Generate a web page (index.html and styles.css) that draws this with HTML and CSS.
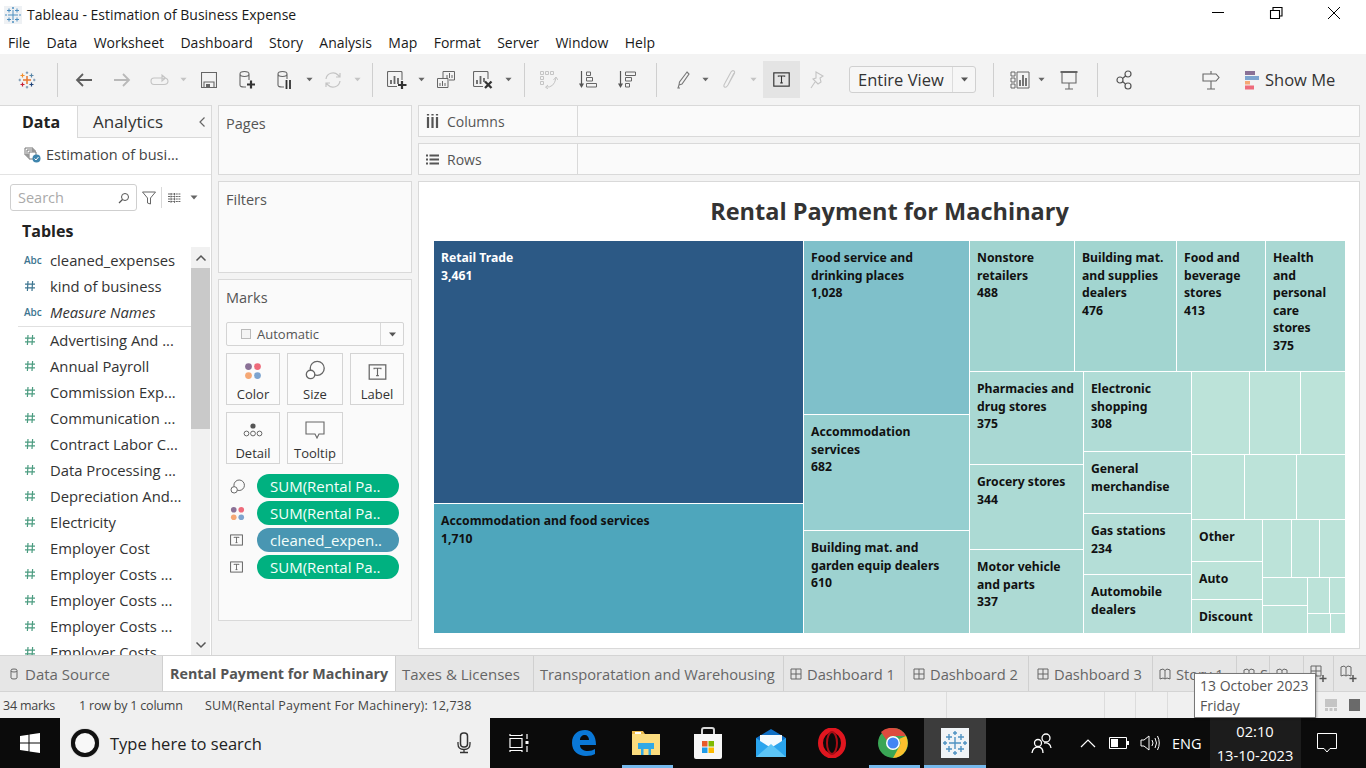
FILE: index.html
```html
<!DOCTYPE html>
<html lang="en">
<head>
<meta charset="utf-8">
<title>Tableau - Estimation of Business Expense</title>
<link rel="stylesheet" href="styles.css">
</head>
<body>
<svg class="defs" width="0" height="0">
  <symbol id="hash" viewBox="0 0 12 12"><path d="M4 1L3.400 11M8.600 1L8 11M1 4.200H11M1 7.800H11" fill="none" stroke="currentColor" stroke-width="1.200"/></symbol>
  <symbol id="caret" viewBox="0 0 8 5"><path d="M0.500 0.500H7.500L4 4.500Z" fill="currentColor"/></symbol>
  <symbol id="tbox" viewBox="0 0 16 14"><rect x="0.750" y="0.750" width="14.500" height="12.500" fill="none" stroke="currentColor" stroke-width="1.100"/><path d="M5 4.500V3.700H11V4.500M8 3.700V10.200M6.800 10.200H9.200" fill="none" stroke="currentColor"/></symbol>
  <symbol id="four" viewBox="0 0 16 16"><circle cx="4" cy="4" r="3" fill="#8a7196"/><circle cx="12" cy="4" r="3" fill="#ee6b7b"/><circle cx="4" cy="12" r="3" fill="#f5a875"/><circle cx="12" cy="12" r="3" fill="#7da4cf"/></symbol>
  <symbol id="size" viewBox="0 0 18 18"><circle cx="11" cy="7.500" r="6.300" fill="none" stroke="#666" stroke-width="1.200"/><circle cx="5" cy="13" r="3.800" fill="#fff" stroke="#666" stroke-width="1.200"/></symbol>
  <symbol id="tab-board" viewBox="0 0 12 12"><path d="M1 1H11V11H1ZM6 1V11M1 6H11" fill="none" stroke="#666"/></symbol>
  <symbol id="book" viewBox="0 0 12 12"><path d="M1 2L4 1L6 2.500L8 1L11 2V11L8 10L6 11L4 10L1 11ZM6 2.500V11" fill="none" stroke="#666"/></symbol>
</svg>

<header class="titlebar">
  <div class="title-left">
    <svg class="app-icon" viewBox="0 0 18 18"><rect width="18" height="18" fill="#eef1f4"/><path d="M9 4V14M4 9H14M5 2.500V6.500M3 4.500H7M13 2.500V6.500M11 4.500H15M5 11.500V15.500M3 13.500H7M13 11.500V15.500M11 13.500H15M9 1V3M8 2H10M9 15V17M8 16H10M1 9H3M15 9H17" stroke="#4d8fc0" stroke-width="1"/></svg>
    <span>Tableau - Estimation of Business Expense</span>
  </div>
  <div class="win-controls">
    <svg viewBox="0 0 58 32"><path d="M23 13.500H35" stroke="#000"/></svg>
    <svg viewBox="0 0 58 32"><path d="M23.500 11.500H32.500V19.500H23.500ZM26 11V8.500H35V17H32.500" fill="none" stroke="#000" stroke-width="1.100"/></svg>
    <svg viewBox="0 0 58 32"><path d="M23 8L35 20M35 8L23 20" stroke="#000"/></svg>
  </div>
</header>

<nav class="menubar">
  <span>File</span><span>Data</span><span>Worksheet</span><span>Dashboard</span><span>Story</span><span>Analysis</span><span>Map</span><span>Format</span><span>Server</span><span>Window</span><span>Help</span>
</nav>

<div class="toolbar">
  <div class="t t-logo"><svg width="18" height="18" viewBox="0 0 18 18" fill="none" stroke-width="1.200"><path d="M9 5V13M5 9H13" stroke="#e8762d" stroke-width="1.500"/><path d="M4.500 2.500V6.500M2.500 4.500H6.500" stroke="#f28e2b"/><path d="M13.500 2.500V6.500M11.500 4.500H15.500" stroke="#5a86a8"/><path d="M4.500 11.500V15.500M2.500 13.500H6.500" stroke="#c72035"/><path d="M13.500 11.500V15.500M11.500 13.500H15.500" stroke="#1f447a"/><path d="M9 0.500V3M7.800 1.700H10.200M9 15V17.500M7.800 16.200H10.200M0.500 9H3M1.700 7.800V10.200M15 9H17.500M16.200 7.800V10.200" stroke="#7f9cb5"/></svg></div>
  <div class="t t-sep1"><i class="sep"></i></div>
  <div class="t t-back"><svg width="17" height="14" viewBox="0 0 17 14"><path d="M17 7H2M8 1L2 7L8 13" fill="none" stroke="#5f5f5f" stroke-width="1.800"/></svg></div>
  <div class="t t-fwd"><svg width="17" height="14" viewBox="0 0 17 14"><path d="M0 7H15M9 1L15 7L9 13" fill="none" stroke="#b9b9b9" stroke-width="1.800"/></svg></div>
  <div class="t t-redo"><svg width="19" height="12" viewBox="0 0 19 12"><path d="M12 4H4Q1 4 1 7Q1 10.500 4 10.500H14Q18 10.500 18 7Q18 5 16 4.200H12M12 1V7L15.500 4Z" fill="none" stroke="#c4c4c4" stroke-width="1.100"/></svg></div>
  <div class="t t-c1 off"><svg class="caret"><use href="#caret"/></svg></div>
  <div class="t t-save"><svg width="16" height="16" viewBox="0 0 16 16"><path d="M0.500 0.500H15.500V15.500H0.500ZM3 15.500V10H13V15.500" fill="none" stroke="#666" stroke-width="1.100"/><rect x="5" y="12" width="4" height="3.500" fill="#666"/></svg></div>
  <div class="t t-add"><svg width="18" height="20" viewBox="0 0 18 20"><path d="M2 4V15Q2 17 6 17H8M2 4Q2 1.500 6.500 1.500T11 4V10M2 4Q2 6.500 6.500 6.500T11 4" fill="none" stroke="#666" stroke-width="1.100"/><path d="M13 10.500V18.500M9 14.500H17" stroke="#333" stroke-width="2.200"/></svg></div>
  <div class="t t-pause"><svg width="18" height="20" viewBox="0 0 18 20"><path d="M2 4V15Q2 17 6 17H8M2 4Q2 1.500 6.500 1.500T11 4V9M2 4Q2 6.500 6.500 6.500T11 4" fill="none" stroke="#666" stroke-width="1.100"/><path d="M10.500 10V19M14 10V19" stroke="#333" stroke-width="1.800"/></svg></div>
  <div class="t t-c2"><svg class="caret"><use href="#caret"/></svg></div>
  <div class="t t-refresh"><svg width="18" height="18" viewBox="0 0 18 18"><path d="M2 8A7 7 0 0 1 14 4L16 6M16 10A7 7 0 0 1 4 14L2 12M16 2V6H12M2 16V12H6" fill="none" stroke="#c4c4c4" stroke-width="1.200"/></svg></div>
  <div class="t t-c3 off"><svg class="caret"><use href="#caret"/></svg></div>
  <div class="t t-sep2"><i class="sep"></i></div>
  <div class="t t-new"><svg width="20" height="18" viewBox="0 0 20 18"><path d="M15 9V1.500Q15 0.500 14 0.500H1.500Q0.500 0.500 0.500 1.500V14.500Q0.500 15.500 1.500 15.500H10" fill="none" stroke="#666" stroke-width="1.100"/><path d="M4 13V9M7.500 13V5M11 13V7" stroke="#666" stroke-width="1.800"/><path d="M15 10V18M11 14H19.500" stroke="#333" stroke-width="2.200"/></svg></div>
  <div class="t t-c4"><svg class="caret"><use href="#caret"/></svg></div>
  <div class="t t-dup"><svg width="18" height="18" viewBox="0 0 18 18"><path d="M6 7V0.500H17.500V9H12" fill="none" stroke="#666"/><path d="M0.500 7.500H11V16.500H0.500Z" fill="none" stroke="#666"/><path d="M10 7V4M12.500 7V2M15 7V4M3 15V12M5.500 15V10M8 15V12" stroke="#666"/></svg></div>
  <div class="t t-clear"><svg width="20" height="18" viewBox="0 0 20 18"><path d="M15 8V1.500Q15 0.500 14 0.500H1.500Q0.500 0.500 0.500 1.500V14.500Q0.500 15.500 1.500 15.500H10" fill="none" stroke="#666" stroke-width="1.100"/><path d="M4 13V9M7.500 13V5M11 11V7" stroke="#666" stroke-width="1.800"/><path d="M12 10.500L18.500 17M18.500 10.500L12 17" stroke="#333" stroke-width="2.300"/></svg></div>
  <div class="t t-c5"><svg class="caret"><use href="#caret"/></svg></div>
  <div class="t t-sep3"><i class="sep"></i></div>
  <div class="t t-swap"><svg width="18" height="18" viewBox="0 0 18 18"><path d="M0.500 0.500H3.500V3.500H0.500ZM5.500 0.500H8.500V3.500H5.500ZM10.500 0.500H13.500V3.500H10.500ZM0.500 5.500H3.500V8.500H0.500ZM0.500 10.500H3.500V13.500H0.500ZM6 16Q14 17 16 7M13.500 9L16 6L18 9M8 14L5.500 16.200L8 18" fill="none" stroke="#c4c4c4" stroke-width="1"/></svg></div>
  <div class="t t-sort1"><svg width="18" height="18" viewBox="0 0 18 18"><path d="M2.500 0V13" fill="none" stroke="#555" stroke-width="1.200"/><path d="M0 12.500H5L2.500 17Z" fill="#555"/><path d="M7.500 1H11.500V4.500H7.500ZM7.500 6.500H13.500V10H7.500ZM7.500 12.500H17.500V16H7.500Z" fill="none" stroke="#666"/></svg></div>
  <div class="t t-sort2"><svg width="18" height="18" viewBox="0 0 18 18"><path d="M2.500 0V13" fill="none" stroke="#555" stroke-width="1.200"/><path d="M0 12.500H5L2.500 17Z" fill="#555"/><path d="M7.500 1H17.500V4.500H7.500ZM7.500 6.500H13.500V10H7.500ZM7.500 12.500H11.500V16H7.500Z" fill="none" stroke="#666"/></svg></div>
  <div class="t t-sep4"><i class="sep"></i></div>
  <div class="t t-high"><svg width="14" height="18" viewBox="0 0 14 18"><path d="M11 1L13 3L6 13L3 14L3.500 11ZM3 14L2 17H4" fill="none" stroke="#777" stroke-width="1.100"/></svg></div>
  <div class="t t-c6"><svg class="caret"><use href="#caret"/></svg></div>
  <div class="t t-clip"><svg width="14" height="20" viewBox="0 0 14 20"><path d="M12 3L6 15Q4 18 2.500 17T3 13L9 2Q10.500 0 12 1T11.500 5L6 15" fill="none" stroke="#c4c4c4" stroke-width="1.100"/></svg></div>
  <div class="t t-c7 off"><svg class="caret"><use href="#caret"/></svg></div>
  <div class="t t-text"><svg class="tbox-lg"><use href="#tbox"/></svg></div>
  <div class="t t-pin"><svg width="14" height="18" viewBox="0 0 14 18"><path d="M6 1L13 5L10 7L11 11L8 13L3 8L6 7ZM5 11L1 17" fill="none" stroke="#c4c4c4" stroke-width="1.100"/></svg></div>
  <div class="view-box"><span class="view-label">Entire View</span><span class="view-arrow"><svg class="caret dark"><use href="#caret"/></svg></span></div>
  <div class="t t-sep5"><i class="sep"></i></div>
  <div class="t t-viz"><svg width="20" height="18" viewBox="0 0 20 18"><path d="M1 1H5V5H1ZM1 7H5V11H1ZM1 13H5V17H1ZM7 1H19V17H7Z" fill="none" stroke="#666"/><path d="M10 15V9M13 15V4M16 15V7" stroke="#666" stroke-width="1.800"/></svg></div>
  <div class="t t-c8"><svg class="caret"><use href="#caret"/></svg></div>
  <div class="t t-pres"><svg width="18" height="20" viewBox="0 0 18 20"><path d="M0.500 2H17.500" stroke="#666" stroke-width="2"/><path d="M2 2V13H16V2M9 13V19M5 19H13" fill="none" stroke="#666" stroke-width="1.100"/></svg></div>
  <div class="t t-sep6"><i class="sep"></i></div>
  <div class="t t-share"><svg width="16" height="20" viewBox="0 0 16 20"><circle cx="12" cy="4" r="3" fill="none" stroke="#555" stroke-width="1.200"/><circle cx="12" cy="16" r="3" fill="none" stroke="#555" stroke-width="1.200"/><circle cx="4" cy="10" r="3" fill="none" stroke="#555" stroke-width="1.200"/><path d="M6.500 8.500L9.500 6M6.500 11.500L9.500 14" stroke="#555" stroke-width="1.200"/></svg></div>
  <div class="t t-guide"><svg width="18" height="20" viewBox="0 0 18 20"><path d="M1 4H14L17 7.500L14 11H1ZM9 1V4M9 11V19M5 19H13" fill="none" stroke="#666" stroke-width="1.100"/></svg></div>
  <div class="showme">
    <svg width="14" height="20" viewBox="0 0 14 20"><rect y="1" width="10" height="4" fill="#8a7196"/><rect y="6" width="14" height="4" fill="#7da4cf"/><rect y="11" width="5" height="3.500" fill="#f5a875"/><rect y="15.500" width="9" height="4" fill="#ee6b7b"/></svg>
    <span>Show Me</span>
  </div>
</div>

<main class="workspace">
  <aside class="data-pane">
    <div class="pane-tabs">
      <div class="pane-tab active">Data</div>
      <div class="pane-tab">Analytics<svg class="collapse" viewBox="0 0 8 12"><path d="M6.500 1.500L2 6L6.500 10.500" fill="none" stroke="#666" stroke-width="1.200"/></svg></div>
    </div>
    <div class="source-row">
      <svg width="17" height="17" viewBox="0 0 17 17"><path d="M1 2H9V9H1ZM3 4H11V11H3Z" fill="none" stroke="#777"/><path d="M5 6H12V13H5Z" fill="#fff" stroke="#777"/><circle cx="12.500" cy="12.500" r="4" fill="#3f85ad"/><path d="M10.500 12.500L12 14L14.500 11" fill="none" stroke="#fff"/></svg>
      <span>Estimation of busi...</span>
    </div>
    <div class="search-row">
      <div class="search-box"><span>Search</span><svg width="12" height="12" viewBox="0 0 12 12"><circle cx="7" cy="5" r="3.500" fill="none" stroke="#555"/><path d="M4.500 7.500L1 11" stroke="#555" stroke-width="1.200"/></svg></div>
      <svg class="filter" width="14" height="14" viewBox="0 0 14 14"><path d="M0.500 1H13.500L8.500 7V13L5.500 12V7Z" fill="none" stroke="#666"/></svg>
      <i class="search-div"></i>
      <svg class="list-ic" width="13" height="10" viewBox="0 0 13 10"><path d="M0 1H13M0 3.500H13M0 6H13M0 8.500H13M3 0V10M6.500 0V10" stroke="#666" stroke-dasharray="2 .6"/></svg>
      <svg class="caret list-caret"><use href="#caret"/></svg>
    </div>
    <h2 class="tables-h">Tables</h2>
    <div class="fields-wrap">
      <ul class="fields">
        <li><b class="abc">Abc</b><span>cleaned_expenses</span></li>
        <li><svg class="hash dim"><use href="#hash"/></svg><span>kind of business</span></li>
        <li class="divided"><b class="abc">Abc</b><em>Measure Names</em></li>
        <li><svg class="hash"><use href="#hash"/></svg><span>Advertising And ...</span></li>
        <li><svg class="hash"><use href="#hash"/></svg><span>Annual Payroll</span></li>
        <li><svg class="hash"><use href="#hash"/></svg><span>Commission Exp...</span></li>
        <li><svg class="hash"><use href="#hash"/></svg><span>Communication ...</span></li>
        <li><svg class="hash"><use href="#hash"/></svg><span>Contract Labor C...</span></li>
        <li><svg class="hash"><use href="#hash"/></svg><span>Data Processing ...</span></li>
        <li><svg class="hash"><use href="#hash"/></svg><span>Depreciation And...</span></li>
        <li><svg class="hash"><use href="#hash"/></svg><span>Electricity</span></li>
        <li><svg class="hash"><use href="#hash"/></svg><span>Employer Cost</span></li>
        <li><svg class="hash"><use href="#hash"/></svg><span>Employer Costs ...</span></li>
        <li><svg class="hash"><use href="#hash"/></svg><span>Employer Costs ...</span></li>
        <li><svg class="hash"><use href="#hash"/></svg><span>Employer Costs ...</span></li>
        <li><svg class="hash"><use href="#hash"/></svg><span>Employer Costs</span></li>
      </ul>
      <div class="scrollbar">
        <div class="sb-btn"><svg width="12" height="8" viewBox="0 0 12 8"><path d="M1.500 6.500L6 2L10.500 6.500" fill="none" stroke="#555" stroke-width="1.500"/></svg></div>
        <div class="sb-thumb"></div>
        <div class="sb-track"></div>
        <div class="sb-btn"><svg width="12" height="8" viewBox="0 0 12 8"><path d="M1.500 1.500L6 6L10.500 1.500" fill="none" stroke="#555" stroke-width="1.500"/></svg></div>
      </div>
    </div>
  </aside>

  <section class="cards">
    <div class="card card-pages"><h3>Pages</h3></div>
    <div class="card card-filters"><h3>Filters</h3></div>
    <div class="card card-marks">
      <h3>Marks</h3>
      <div class="mark-type">
        <span class="mark-type-main"><i class="square"></i>Automatic</span>
        <span class="mark-type-arrow"><svg class="caret dark"><use href="#caret"/></svg></span>
      </div>
      <div class="mark-grid">
        <div class="mark-btn"><svg width="18" height="18"><use href="#four"/></svg><span>Color</span></div>
        <div class="mark-btn"><svg width="20" height="20"><use href="#size"/></svg><span>Size</span></div>
        <div class="mark-btn"><svg class="tbox-lg grey"><use href="#tbox"/></svg><span>Label</span></div>
        <div class="mark-btn"><svg width="20" height="18" viewBox="0 0 20 18"><circle cx="10" cy="5" r="2.600" fill="#555"/><circle cx="3.500" cy="12.500" r="2.400" fill="none" stroke="#666"/><circle cx="10" cy="12.500" r="2.400" fill="none" stroke="#666"/><circle cx="16.500" cy="12.500" r="2.400" fill="none" stroke="#666"/></svg><span>Detail</span></div>
        <div class="mark-btn"><svg width="20" height="18" viewBox="0 0 20 18"><path d="M1 1H19V13H14L12 17L10 13H1Z" fill="none" stroke="#666" stroke-width="1.100"/></svg><span>Tooltip</span></div>
      </div>
      <div class="pills">
        <div class="pill-row"><svg width="15" height="15"><use href="#size"/></svg><span class="pill">SUM(Rental Pa..</span></div>
        <div class="pill-row"><svg width="15" height="15"><use href="#four"/></svg><span class="pill">SUM(Rental Pa..</span></div>
        <div class="pill-row"><svg class="tbox-sm"><use href="#tbox"/></svg><span class="pill blue">cleaned_expen..</span></div>
        <div class="pill-row"><svg class="tbox-sm"><use href="#tbox"/></svg><span class="pill">SUM(Rental Pa..</span></div>
      </div>
    </div>
  </section>

  <section class="stage">
    <div class="shelf"><div class="shelf-label"><svg width="13" height="14" viewBox="0 0 13 14"><path d="M2 3V14M6.500 3V14M11 3V14M2 0V1.500M6.500 0V1.500M11 0V1.500" stroke="#555" stroke-width="2.200"/></svg>Columns</div></div>
    <div class="shelf"><div class="shelf-label"><svg width="13" height="11" viewBox="0 0 13 11"><path d="M0 1.500H2M3.500 1.500H13M0 5.500H2M3.500 5.500H13M0 9.500H2M3.500 9.500H13" stroke="#555" stroke-width="2"/></svg>Rows</div></div>
    <div class="viz">
      <h1>Rental Payment for Machinary</h1>
      <div class="tm row grow">
        <div class="col" style="flex:369 1 0">
          <div class="cell light-text" style="flex:262 1 0;background:#2c5985"><b>Retail Trade</b><b>3,461</b></div>
          <div class="cell" style="flex:129 1 0;background:#4ea6bc"><b>Accommodation and food services</b><b>1,710</b></div>
        </div>
        <div class="col" style="flex:165 1 0">
          <div class="cell" style="flex:173 1 0;background:#7fc0ca"><b>Food service and<br>drinking places</b><b>1,028</b></div>
          <div class="cell" style="flex:115 1 0;background:#96cfd0"><b>Accommodation<br>services</b><b>682</b></div>
          <div class="cell" style="flex:102 1 0;background:#9dd2d0"><b>Building mat. and<br>garden equip dealers</b><b>610</b></div>
        </div>
        <div class="col" style="flex:375 1 0">
          <div class="row" style="flex:130 1 0">
            <div class="cell" style="flex:104 1 0;background:#a1d4d0"><b>Nonstore<br>retailers</b><b>488</b></div>
            <div class="cell" style="flex:101 1 0;background:#a2d5d0"><b>Building mat.<br>and supplies<br>dealers</b><b>476</b></div>
            <div class="cell" style="flex:88 1 0;background:#a7d7d2"><b>Food and<br>beverage<br>stores</b><b>413</b></div>
            <div class="cell" style="flex:79 1 0;background:#a9d8d3"><b>Health<br>and<br>personal<br>care<br>stores</b><b>375</b></div>
          </div>
          <div class="row" style="flex:261 1 0">
            <div class="col" style="flex:113 1 0">
              <div class="cell" style="flex:92 1 0;background:#a9d8d3"><b>Pharmacies and<br>drug stores</b><b>375</b></div>
              <div class="cell" style="flex:84 1 0;background:#acdad4"><b>Grocery stores</b><b>344</b></div>
              <div class="cell" style="flex:83 1 0;background:#addad4"><b>Motor vehicle<br>and parts</b><b>337</b></div>
            </div>
            <div class="col" style="flex:107 1 0">
              <div class="cell" style="flex:79 1 0;background:#b0dcd6"><b>Electronic<br>shopping</b><b>308</b></div>
              <div class="cell" style="flex:61 1 0;background:#b3ddd7"><b>General<br>merchandise</b></div>
              <div class="cell" style="flex:60 1 0;background:#b4ded7"><b>Gas stations</b><b>234</b></div>
              <div class="cell" style="flex:58 1 0;background:#b5ded8"><b>Automobile<br>dealers</b></div>
            </div>
            <div class="col" style="flex:153 1 0">
              <div class="row" style="flex:82 1 0">
                <div class="cell pale" style="flex:57 1 0"></div>
                <div class="cell pale" style="flex:50 1 0"></div>
                <div class="cell pale" style="flex:44 1 0"></div>
              </div>
              <div class="row" style="flex:64 1 0">
                <div class="cell pale" style="flex:52 1 0"></div>
                <div class="cell pale" style="flex:51 1 0"></div>
                <div class="cell pale" style="flex:48 1 0"></div>
              </div>
              <div class="row" style="flex:113 1 0">
                <div class="col" style="flex:70 1 0">
                  <div class="cell pale" style="flex:41 1 0"><b>Other</b></div>
                  <div class="cell pale" style="flex:37 1 0"><b>Auto</b></div>
                  <div class="cell pale" style="flex:33 1 0"><b>Discount</b></div>
                </div>
                <div class="col" style="flex:82 1 0">
                  <div class="row" style="flex:57 1 0">
                    <div class="cell pale" style="flex:28 1 0"></div>
                    <div class="cell pale" style="flex:27 1 0"></div>
                    <div class="cell pale" style="flex:25 1 0"></div>
                  </div>
                  <div class="row" style="flex:55 1 0">
                    <div class="col" style="flex:44 1 0">
                      <div class="cell pale" style="flex:27 1 0"></div>
                      <div class="cell pale" style="flex:27 1 0"></div>
                    </div>
                    <div class="col" style="flex:37 1 0">
                      <div class="row" style="flex:35 1 0">
                        <div class="cell pale" style="flex:21 1 0"></div>
                        <div class="cell pale" style="flex:15 1 0"></div>
                      </div>
                      <div class="row" style="flex:19 1 0">
                        <div class="cell pale" style="flex:22 1 0"></div>
                        <div class="cell pale" style="flex:14 1 0"></div>
                      </div>
                    </div>
                  </div>
                </div>
              </div>
            </div>
          </div>
        </div>
      </div>
    </div>
  </section>
</main>

<div class="tabs">
  <div class="tab tab-ds"><svg width="8" height="12" viewBox="0 0 8 12"><path d="M1 2V10Q1 11 4 11T7 10V2Q7 1 4 1T1 2ZM1 3Q1 4 4 4T7 3" fill="none" stroke="#666"/></svg>Data Source</div>
  <div class="tab tab-active">Rental Payment for Machinary</div>
  <div class="tab tab-tax">Taxes &amp; Licenses</div>
  <div class="tab tab-trans">Transporatation and Warehousing</div>
  <div class="tab tab-d1"><svg width="12" height="12"><use href="#tab-board"/></svg>Dashboard 1</div>
  <div class="tab tab-d2"><svg width="12" height="12"><use href="#tab-board"/></svg>Dashboard 2</div>
  <div class="tab tab-d3"><svg width="12" height="12"><use href="#tab-board"/></svg>Dashboard 3</div>
  <div class="tab tab-s1"><svg width="12" height="12"><use href="#book"/></svg>Story 1</div>
  <div class="tab tab-s2"><svg width="12" height="12"><use href="#book"/></svg>S</div>
  <div class="tab tab-s3"><svg width="12" height="12"><use href="#book"/></svg></div>
  <div class="tab tab-plus"><svg width="18" height="18" viewBox="0 0 18 18"><path d="M1 1H11V11H1ZM6 1V11M1 6H11" fill="none" stroke="#666"/><path d="M13 10V17M9.500 13.500H16.500" stroke="#555" stroke-width="1.500"/></svg></div>
  <div class="tab tab-plus2"><svg width="18" height="18" viewBox="0 0 18 18"><path d="M1 2L4 1L6 2.500L8 1L11 2V11L8 10L6 11L4 10L1 11ZM6 2.500V11" fill="none" stroke="#666"/><path d="M13 10V17M9.500 13.500H16.500" stroke="#555" stroke-width="1.500"/></svg></div>
</div>

<div class="status">
  <span class="st st-marks">34 marks</span>
  <span class="st st-rows">1 row by 1 column</span>
  <span class="st st-sum">SUM(Rental Payment For Machinery): 12,738</span>
  <span class="st st-a"></span><span class="st st-b"></span><span class="st st-c"></span>
  <span class="st-icons">
    <svg width="12" height="12" viewBox="0 0 12 12"><rect width="12" height="8" fill="#c5c5c5"/><rect y="9" width="3" height="3" fill="#c5c5c5"/><rect x="4.500" y="9" width="3" height="3" fill="#c5c5c5"/><rect x="9" y="9" width="3" height="3" fill="#c5c5c5"/></svg>
    <svg width="11" height="12" viewBox="0 0 11 12"><rect width="11" height="12" fill="#6a6a6a"/></svg>
  </span>
</div>

<footer class="taskbar">
  <div class="start"><svg width="20" height="20" viewBox="0 0 20 20"><path d="M0 3L8.500 1.700V9.500H0ZM9.500 1.500L20 0V9.500H9.500ZM0 10.500H8.500V18.300L0 17ZM9.500 10.500H20V20L9.500 18.500Z" fill="#fff"/></svg></div>
  <div class="task-search">
    <i class="cortana"></i>
    <span>Type here to search</span>
    <svg width="16" height="22" viewBox="0 0 16 22"><rect x="4.500" y="1" width="7" height="14" rx="3" fill="none" stroke="#333" stroke-width="1.500"/><path d="M2 10V12Q2 17.500 8 17.500T14 12V10M8 18V20.500M4 20.500H12" fill="none" stroke="#333" stroke-width="1.300"/></svg>
  </div>
  <div class="tk tk-view"><svg width="20" height="20" viewBox="0 0 20 20"><path d="M1 5.500H13V14.500H1ZM1 1V2.500H13V1M1 19V17.500H13V19M18 1V6M18 13V19" fill="none" stroke="#fff" stroke-width="1.200"/><rect x="16.500" y="8" width="3" height="3" fill="#fff"/></svg></div>
  <div class="tk tk-edge"><svg width="26" height="28" viewBox="0 0 26 28"><path d="M1 14C1 5 7 1 14 1C21 1 25 7 25 16H9C9 20 13 22 17 22C20 22 22 21 24 20V25C22 26 19 27 15 27C7 27 1 22 1 14ZM9 11H18C18 8 16 6 14 6C11 6 9 8 9 11Z" fill="#0a78d7"/></svg></div>
  <div class="tk tk-exp running"><svg width="28" height="26" viewBox="0 0 28 26"><path d="M0 4H28V25H0Z" fill="#fbdc7e"/><path d="M0 1H11L13 4H0Z" fill="#e9b94a"/><rect x="3" y="2" width="6" height="2" fill="#fff"/><path d="M6 13H22V19H19V25H9V19H6Z" fill="#2fa9e6"/><rect x="11.500" y="19" width="5" height="6" fill="#fbdc7e"/></svg></div>
  <div class="tk tk-store"><svg width="28" height="32" viewBox="0 0 28 32"><path d="M8 8V3Q8 1 10 1H18Q20 1 20 3V8" fill="none" stroke="#d8d8d8" stroke-width="2"/><path d="M0 7H28V30Q28 32 26 32H2Q0 32 0 30Z" fill="#f6f6f6"/><rect x="8" y="14" width="5.500" height="5.500" fill="#e85b2a"/><rect x="14.500" y="14" width="5.500" height="5.500" fill="#7fba00"/><rect x="8" y="20.500" width="5.500" height="5.500" fill="#1e9be8"/><rect x="14.500" y="20.500" width="5.500" height="5.500" fill="#fbb900"/></svg></div>
  <div class="tk tk-mail"><svg width="30" height="28" viewBox="0 0 30 28"><path d="M0 9L15 0L30 9V28H0Z" fill="#0e6fc4"/><path d="M0 9L15 19L30 9V28H0Z" fill="#2aa5ee"/><path d="M4 6H26V12L15 19L4 12Z" fill="#f3fbff"/><path d="M0 28L15 15L30 28Z" fill="#5cc5f7"/></svg></div>
  <div class="tk tk-opera"><svg width="28" height="30" viewBox="0 0 28 30"><ellipse cx="14" cy="15" rx="11.500" ry="13" fill="none" stroke="#e0161f" stroke-width="5"/><ellipse cx="14" cy="15" rx="5" ry="11" fill="none" stroke="#a80c14" stroke-width="2"/></svg></div>
  <div class="tk tk-chrome running"><svg width="30" height="30" viewBox="0 0 30 30"><circle cx="15" cy="15" r="15" fill="#3aa655"/><path d="M15 0A15 15 0 0 1 28 8H15A7 7 0 0 0 8.500 12L3 4A15 15 0 0 1 15 0Z" fill="#dd4b3e"/><path d="M28 8A15 15 0 0 1 15 30L21 19A7 7 0 0 0 21 11Z" fill="#fbc02d"/><circle cx="15" cy="15" r="7" fill="#fff"/><circle cx="15" cy="15" r="5.500" fill="#4285f4"/></svg></div>
  <div class="tk tk-tableau running"><div class="tb-tile"><svg width="26" height="26" viewBox="0 0 26 26"><path d="M13 7V19M7 13H19M7 4V10M4 7H10M19 4V10M16 7H22M7 16V22M4 19H10M19 16V22M16 19H22M13 1V5M11 3H15M13 21V25M11 23H15M1 13H5M3 11V15M21 13H25M23 11V15" stroke="#4f92c2" stroke-width="1.400"/></svg></div></div>
  <div class="tray">
    <svg class="tr-people" width="22" height="22" viewBox="0 0 22 22"><circle cx="15" cy="6" r="4" fill="none" stroke="#fff" stroke-width="1.300"/><circle cx="7" cy="11" r="3.500" fill="none" stroke="#fff" stroke-width="1.300"/><path d="M1 21Q2 15 7 15T12 21M13 11Q19 10 20 16" fill="none" stroke="#fff" stroke-width="1.300"/></svg>
    <svg class="tr-up" width="16" height="9" viewBox="0 0 16 9"><path d="M1 8L8 1L15 8" fill="none" stroke="#fff" stroke-width="1.200"/></svg>
    <svg class="tr-bat" width="20" height="12" viewBox="0 0 20 12"><path d="M0.500 0.500H17.500V11.500H0.500Z" fill="none" stroke="#fff"/><rect x="2" y="2" width="7" height="8" fill="#fff"/><rect x="18" y="4" width="2" height="4" fill="#fff"/></svg>
    <svg class="tr-vol" width="20" height="18" viewBox="0 0 20 18"><path d="M1 6H4L9 2V16L4 12H1Z" fill="none" stroke="#fff"/><path d="M12 6Q14 9 12 12M15 4Q18 9 15 14M17.500 2Q21 9 17.500 16" fill="none" stroke="#fff"/></svg>
    <span class="tr-eng">ENG</span>
    <div class="clock"><span>02:10</span><span>13-10-2023</span></div>
    <svg class="tr-note" width="20" height="20" viewBox="0 0 20 20"><path d="M0.500 0.500H19.500V15.500H13L10 19L7 15.500H0.500Z" fill="none" stroke="#fff"/></svg>
  </div>
</footer>

<div class="date-tip"><div>13 October 2023</div><div>Friday</div></div>
</body>
</html>
```

FILE: styles.css
```css
* { box-sizing: border-box; }
html, body { margin: 0; padding: 0; }
body {
  width: 1366px; height: 768px; overflow: hidden; position: relative;
  display: flex; flex-direction: column;
  font-family: "Open Sans", "Noto Sans", sans-serif;
  color: #333; background: #fff;
}
.defs { position: absolute; }
i { display: block; font-style: normal; }

/* title */
.titlebar { height: 30px; flex: none; display: flex; justify-content: space-between; align-items: center; background: #fff; }
.title-left { display: flex; align-items: center; gap: 5px; padding: 0 0 1px 4px; font-size: 14px; color: #1a1a1a; }
.app-icon { width: 18px; height: 18px; }
.win-controls { display: flex; margin-right: 3px; }
.win-controls svg { width: 58px; height: 32px; }

.menubar { height: 24px; flex: none; display: flex; align-items: center; padding-left: 8px; gap: 16.400px; font-size: 14px; color: #1a1a1a; background: #fff; }

/* toolbar */
.toolbar { height: 44px; flex: none; display: flex; align-items: center; background: #f3f3f3; padding-top: 7px; }
.t { height: 37px; flex: none; display: flex; align-items: center; justify-content: center; color: #666; }
.t > svg { flex: none; }
.sep { width: 1px; height: 34px; background: #cfcfcf; }
.caret { width: 7px; height: 5px; color: #666; flex: none; }
.caret.dark { width: 9px; height: 5px; color: #555; }
.off { color: #c4c4c4; }
.off .caret { color: #c4c4c4; }
.t-logo { width: 54px; } .t-sep1 { width: 6px; } .t-back { width: 46px; } .t-fwd { width: 32px; }
.t-redo { width: 42px; } .t-c1 { width: 6px; } .t-save { width: 46px; } .t-add { width: 30px; }
.t-pause { width: 46px; } .t-c2 { width: 2px; } .t-refresh { width: 46px; } .t-c3 { width: 2px; }
.t-sep2 { width: 28px; } .t-new { width: 22px; } .t-c4 { width: 26px; } .t-dup { width: 24px; }
.t-clear { width: 50px; } .t-c5 { width: 0; } .t-sep3 { width: 32px; } .t-swap { width: 18px; }
.t-sort1 { width: 60px; } .t-sort2 { width: 18px; } .t-sep4 { width: 40px; } .t-high { width: 14px; }
.t-c6 { width: 30px; } .t-clip { width: 18px; } .t-c7 { width: 31px; }
.t-text { width: 37px; margin-left: -6px; background: #e4e4e4; color: #333; }
.tbox-lg { width: 17px; height: 15px; color: #333; }
.tbox-lg.grey { color: #666; width: 19px; height: 16px; }
.tbox-sm { width: 13px; height: 12px; color: #555; }
.t-pin { width: 34px; }
.view-box { margin-left: 15px; width: 127px; height: 27px; flex: none; display: flex; border: 1px solid #d0d0d0; border-radius: 3px; background: #f6f6f6; font-size: 16.500px; color: #333; }
.view-label { flex: 1; display: flex; align-items: center; padding-left: 8px; border-right: 1px solid #dcdcdc; }
.view-arrow { width: 22px; display: flex; align-items: center; justify-content: center; }
.t-sep5 { width: 35px; } .t-viz { width: 18px; } .t-c8 { width: 24px; } .t-pres { width: 31px; }
.t-sep6 { width: 26px; } .t-share { width: 28px; }
.t-guide { width: 20px; margin-left: 63px; }
.showme { margin-left: 24px; display: flex; align-items: center; gap: 6px; font-size: 16.500px; color: #333; flex: none; }

/* workspace */
.workspace { flex: 1; min-height: 0; display: flex; background: #f3f3f3; padding-top: 7px; gap: 6px; }
.data-pane { width: 212px; flex: none; background: #fff; border-top: 1px solid #d9d9d9; border-right: 1px solid #d9d9d9; display: flex; flex-direction: column; overflow: hidden; }
.pane-tabs { display: flex; height: 32px; flex: none; }
.pane-tab { display: flex; align-items: center; font-size: 17px; color: #333; }
.pane-tab.active { width: 78px; padding-left: 22px; font-size: 16px; font-weight: 700; color: #222; border-right: 1px solid #d9d9d9; }
.pane-tab:not(.active) { flex: 1; padding-left: 15px; background: #f7f7f7; border-bottom: 1px solid #d9d9d9; position: relative; justify-content: space-between; padding-right: 5px; }
.collapse { width: 8px; height: 12px; }
.source-row { height: 37px; flex: none; display: flex; align-items: center; gap: 5px; padding: 0 0 3px 24px; font-size: 14.500px; color: #444; border-bottom: 1px solid #e3e3e3; }
.search-row { flex: none; margin-top: 9px; height: 27px; display: flex; align-items: center; padding-left: 10px; }
.search-box { width: 127px; height: 27px; border: 1px solid #cfcfcf; border-radius: 3px; display: flex; align-items: center; justify-content: space-between; padding: 0 6px 0 7px; font-size: 14.500px; color: #aaa; }
.filter { margin-left: 5px; }
.search-div { width: 1px; height: 21px; background: #d9d9d9; margin-left: 5px; }
.list-ic { margin-left: 6px; }
.list-caret { margin-left: 9px; width: 8px; }
.tables-h { margin: 8px 0 0 22px; height: 28px; font-size: 16px; line-height: 24px; font-weight: 700; color: #222; flex: none; }
.fields-wrap { flex: 1; min-height: 0; display: flex; }
.fields { list-style: none; margin: 0; padding: 0 0 0 18px; width: 191px; flex: none; overflow: hidden; }
.fields li { height: 26px; display: flex; align-items: center; font-size: 14.800px; color: #333; white-space: nowrap; }
.fields li.divided { border-bottom: 1px solid #e0e0e0; height: 28px; padding-bottom: 1px; }
.abc { width: 32px; font-size: 10px; font-weight: 600; color: #3d7590; padding-left: 6px; flex: none; }
.hash { width: 12px; height: 12px; margin: 0 14px 0 6px; color: #4b9c80; flex: none; }
.hash.dim { color: #3d7590; }
.scrollbar { width: 19px; flex: none; background: #f1f1f1; display: flex; flex-direction: column; }
.sb-btn { height: 21px; display: flex; align-items: center; justify-content: center; flex: none; }
.sb-thumb { height: 161px; background: #c9c9c9; flex: none; }
.sb-track { flex: 1; }

/* cards */
.cards { width: 194px; flex: none; display: flex; flex-direction: column; gap: 6px; }
.card { background: #fafafa; border: 1px solid #d9d9d9; flex: none; }
.card h3 { margin: 0; font-size: 14.500px; font-weight: 400; color: #555; padding: 8px 0 0 7px; line-height: 20px; }
.card-pages { height: 70px; }
.card-filters { height: 92px; }
.card-marks { height: 342px; }
.mark-type { margin: 14px 7px 0 7px; height: 24px; border: 1px solid #d4d4d4; border-radius: 2px; display: flex; font-size: 13px; color: #555; background: #fbfbfb; }
.mark-type-main { flex: 1; display: flex; align-items: center; gap: 6px; padding-left: 14px; border-right: 1px solid #d9d9d9; }
.square { width: 10px; height: 10px; border: 1px solid #bbb; background: #f4f4f4; }
.mark-type-arrow { width: 22px; display: flex; align-items: center; justify-content: center; }
.mark-grid { margin: 7px 0 0 7px; display: grid; grid-template-columns: 54px 56px 54px; grid-auto-rows: 52px; gap: 7px; }
.mark-btn { border: 1px solid #d4d4d4; display: flex; flex-direction: column; align-items: center; justify-content: flex-end; gap: 5px; padding-bottom: 1px; font-size: 13px; color: #333; background: #fbfbfb; }
.pills { margin: 10px 0 0 10px; display: flex; flex-direction: column; gap: 3px; }
.pill-row { display: flex; align-items: center; gap: 6px; height: 24px; }
.pill-row svg { flex: none; margin-left: 1px; }
.pill { width: 142px; height: 24px; margin-left: auto; margin-right: 12px; border-radius: 12px; background: #00b180; color: #f4fffb; font-size: 15px; line-height: 24px; padding-left: 13px; white-space: nowrap; }
.pill.blue { background: #4996b2; }

/* stage */
.stage { width: 942px; flex: none; display: flex; flex-direction: column; gap: 6px; padding-bottom: 6px; }
.shelf { height: 32px; flex: none; border: 1px solid #d9d9d9; background: #fafafa; display: flex; }
.shelf-label { width: 159px; border-right: 1px solid #d9d9d9; display: flex; align-items: center; gap: 8px; padding-left: 7px; font-size: 14px; color: #555; }
.viz { flex: 1; background: #fff; border: 1px solid #d9d9d9; display: flex; flex-direction: column; padding: 0 14px 15px 15px; min-height: 0; }
.viz h1 { margin: 0; height: 59px; text-align: center; font-size: 23.500px; font-weight: 700; color: #333; line-height: 58px; flex: none; }

/* treemap */
.row { display: flex; gap: 1px; min-width: 0; min-height: 0; }
.col { display: flex; flex-direction: column; gap: 1px; min-width: 0; min-height: 0; }
.grow { flex: 1; }
.tm { background: #fff; }
.cell { display: flex; flex-direction: column; overflow: hidden; font-family: "Noto Sans", sans-serif; font-size: 12.200px; line-height: 17.500px; color: #111; min-width: 0; min-height: 0; }
.cell b { font-weight: 700; display: block; margin: 0 2px 0 7px; white-space: nowrap; }
.cell b:first-child { margin-top: 8px; }
.cell.pale { background: #bce3d9; }
.light-text { color: #fff; }

/* tabs */
.tabs { height: 37px; flex: none; display: flex; background: #e6e6e6; border-top: 1px solid #d4d4d4; border-bottom: 1px solid #d4d4d4; font-size: 14.700px; color: #666; }
.tab { flex: none; display: flex; align-items: center; gap: 5px; padding-left: 6px; border-right: 1px solid #d0d0d0; white-space: nowrap; overflow: hidden; }
.tab-ds { width: 163px; padding-left: 10px; gap: 7px; font-size: 15px; }
.tab-active { width: 233px; background: #fff; font-weight: 700; font-size: 14.300px; color: #555; padding-left: 7px; border-right: 1px solid #d0d0d0; }
.tab-tax { width: 138px; font-size: 15px; }
.tab-trans { width: 250px; }
.tab-d1 { width: 121px; }
.tab-d2 { width: 124px; padding-left: 8px; }
.tab-d3 { width: 124px; padding-left: 8px; }
.tab-s1 { width: 84px; }
.tab-s2 { width: 33px; }
.tab-s3 { width: 34px; }
.tab-plus { width: 30px; border-right: 1px solid #d0d0d0; }
.tab-plus2 { width: 33px; border-right: 0; }

/* status */
.status { height: 26px; flex: none; display: flex; align-items: center; background: #f0f0f0; font-size: 12.500px; color: #444; letter-spacing: -.2px; }
.st { height: 100%; display: flex; align-items: center; flex: none; }
.st-marks { width: 79px; padding-left: 3px; }
.st-rows { width: 126px; }
.st-sum { width: 742px; border-right: 1px solid #dcdcdc; letter-spacing: .2px; }
.st-a { width: 158px; border-right: 1px solid #dcdcdc; }
.st-b { width: 31px; border-right: 1px solid #dcdcdc; }
.st-c { width: 32px; border-right: 1px solid #dcdcdc; }
.st-icons { margin-left: auto; display: flex; gap: 12px; padding-right: 6px; align-items: center; }

/* taskbar */
.taskbar { height: 50px; flex: none; display: flex; background: #0b0b0b; }
.start { width: 60px; flex: none; display: flex; align-items: center; justify-content: center; }
.task-search { width: 430px; flex: none; background: #f0f0f0; display: flex; align-items: center; padding: 0 18px 0 11px; color: #222; font-size: 16.500px; }
.task-search span { margin-left: 11px; flex: 1; }
.cortana { width: 28px; height: 28px; border-radius: 50%; border: 4px solid #111; background: #f8f8f8; box-shadow: 0 0 1px #555; }
.tk { flex: none; height: 50px; display: flex; align-items: center; justify-content: center; position: relative; }
.running::after { content: ""; position: absolute; left: 0; right: 0; bottom: 0; height: 3px; background: #76b9ed; }
.tk-view { width: 58px; }
.tk-edge { width: 62px; margin-left: 5px; }
.tk-exp { width: 62px; }
.tk-exp::after { left: 7px; right: 4px; }
.tk-store { width: 62px; }
.tk-mail { width: 63px; }
.tk-opera { width: 60px; }
.tk-chrome { width: 62px; }
.tk-chrome::after { left: 7px; right: 4px; }
.tk-tableau { width: 62px; background: #3c3c3c; }
.tb-tile { width: 28px; height: 30px; background: #f0f4f7; display: flex; align-items: center; justify-content: center; }
.tray { flex: 1; display: flex; align-items: center; color: #fff; position: relative; height: 50px; }
.tr-people { margin-left: 45px; }
.tr-up { margin-left: 27px; }
.tr-bat { margin-left: 13px; }
.tr-vol { margin-left: 11px; }
.tr-eng { margin-left: 12px; font-size: 14.500px; }
.clock { margin-left: 8px; width: 91px; height: 50px; background: #1c1c1c; display: flex; flex-direction: column; align-items: center; justify-content: center; gap: 4px; font-size: 14.700px; line-height: 20px; }
.tr-note { margin-left: 16px; }

.date-tip { position: absolute; left: 1194px; top: 673px; width: 122px; height: 45px; background: #fff; border: 1px solid #777; padding: 2px 0 0 5px; font-size: 14px; line-height: 20px; color: #555; box-shadow: 1px 1px 2px rgba(0,0,0,.25); }
```
